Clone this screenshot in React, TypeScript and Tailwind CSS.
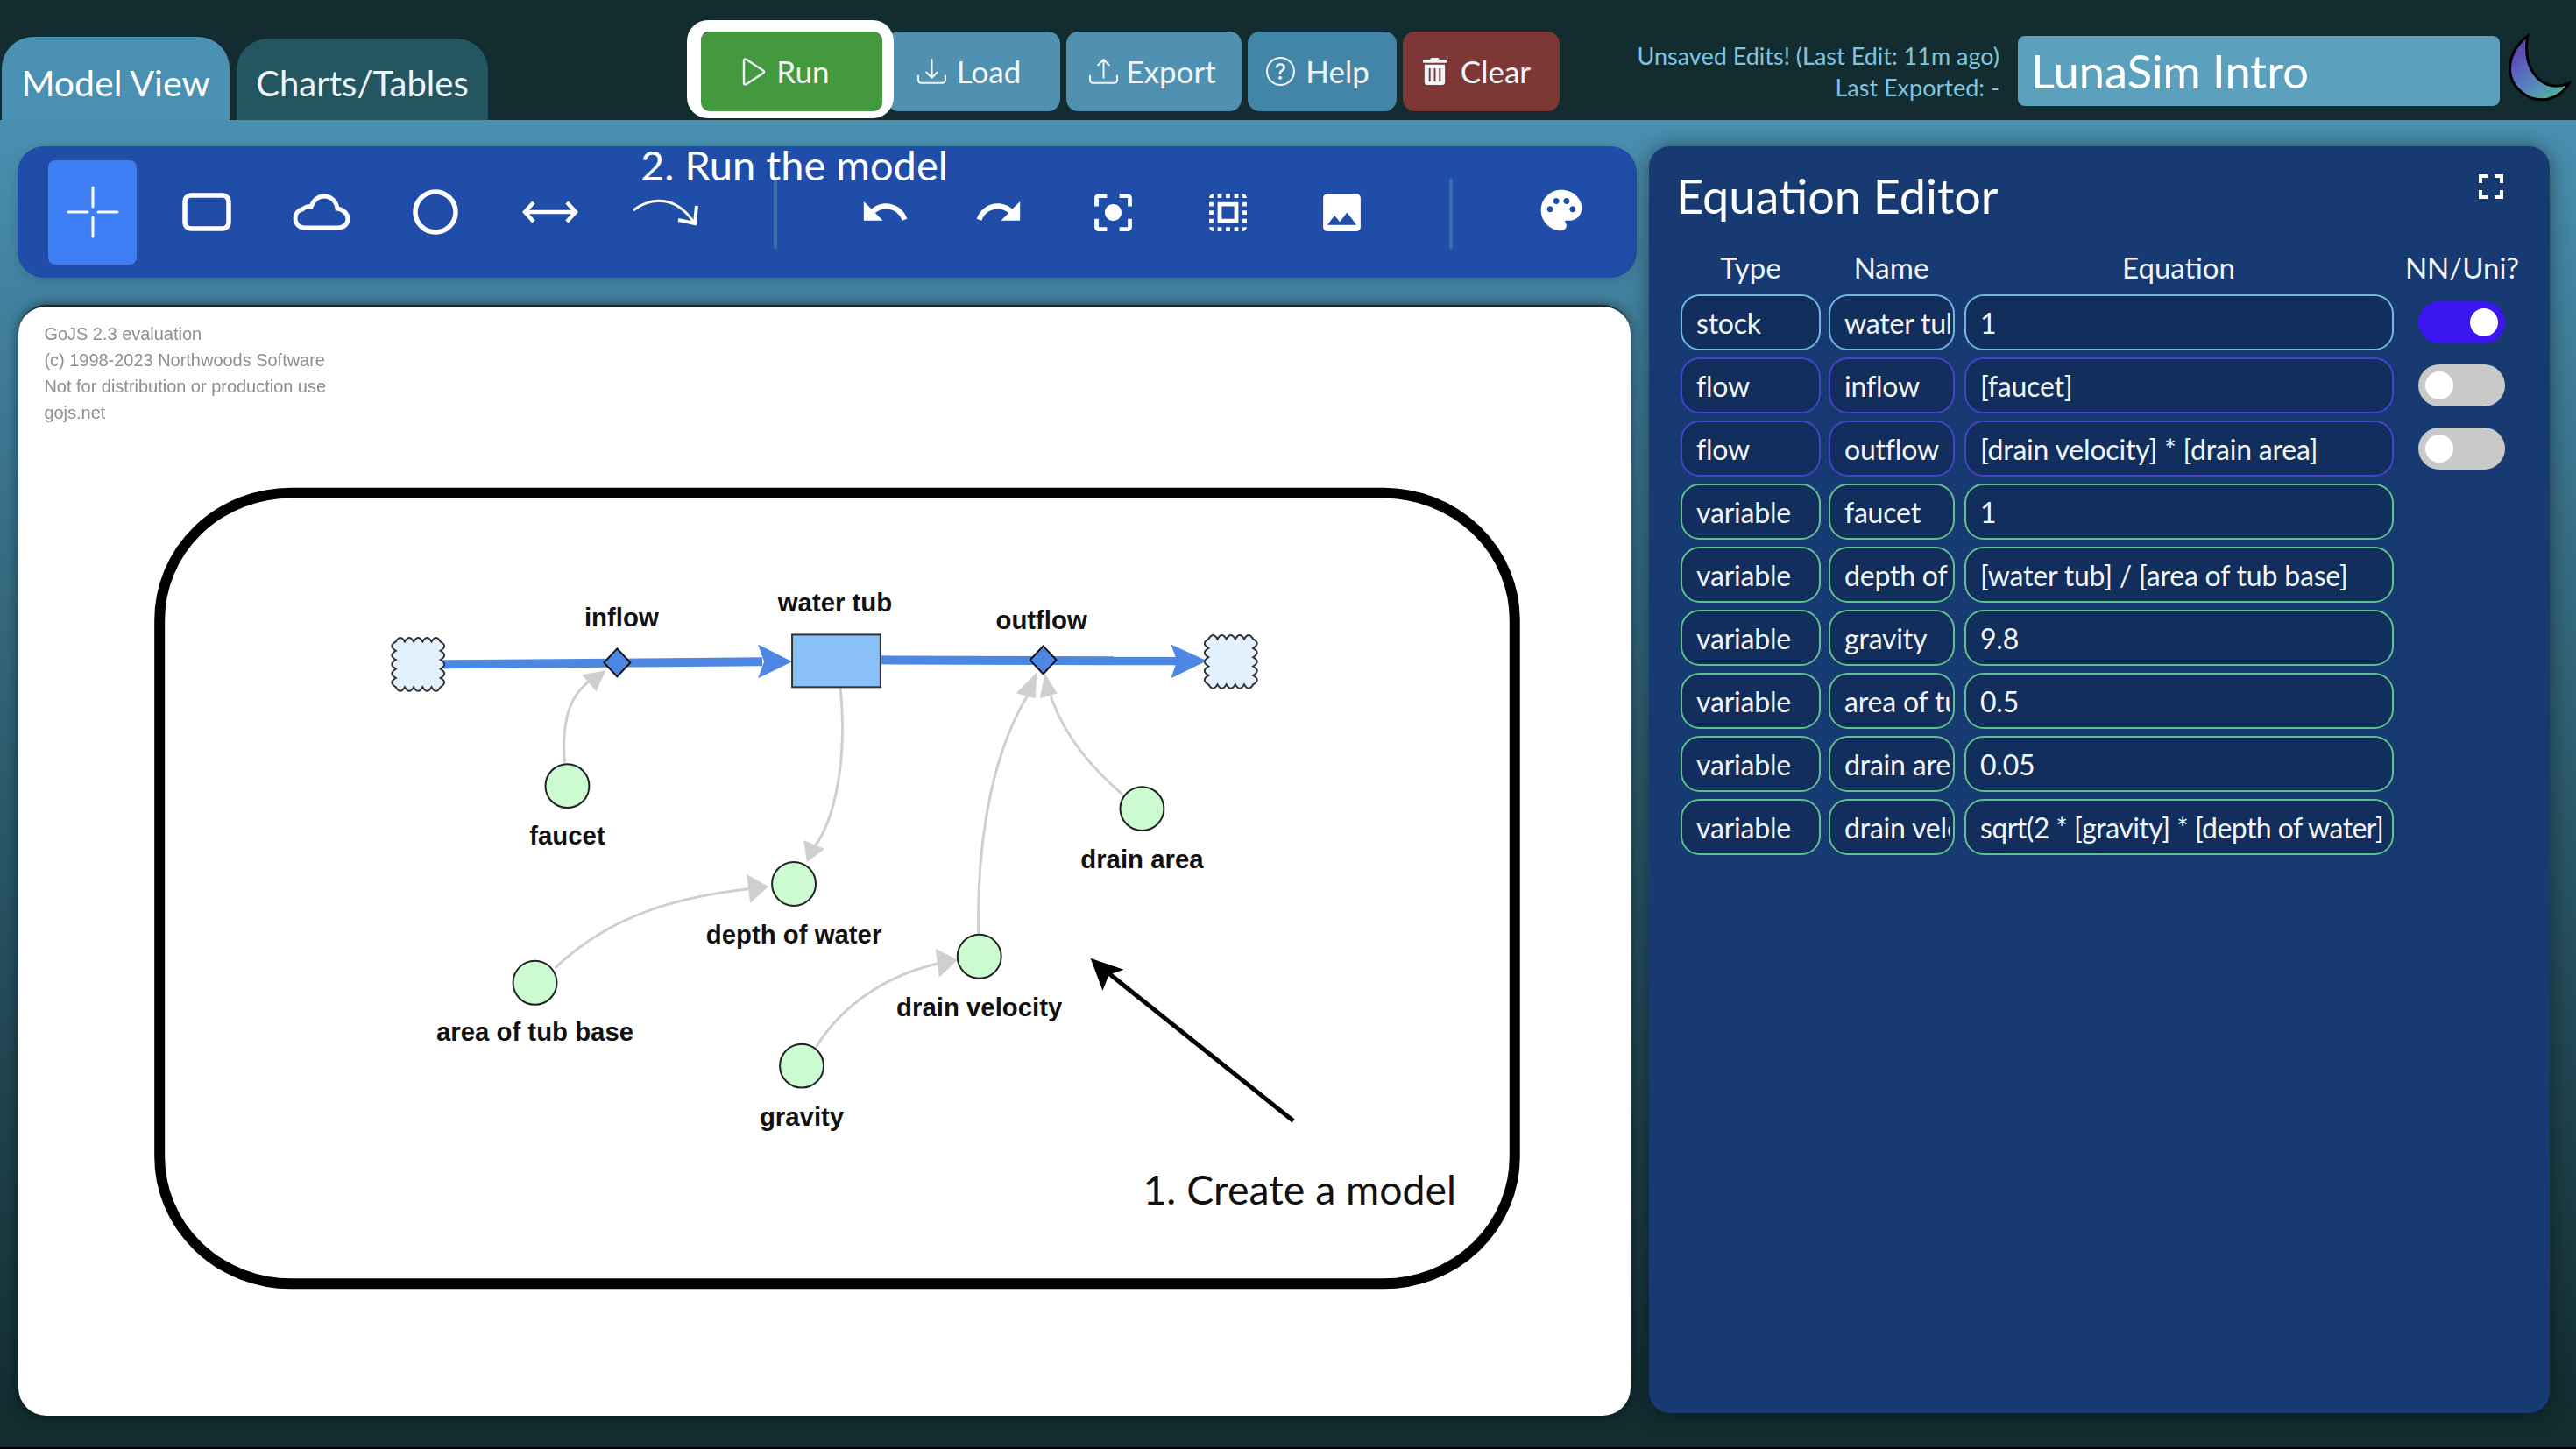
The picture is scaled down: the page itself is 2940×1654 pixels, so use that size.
import React from "react";
import { BsDownload, BsUpload, BsQuestionCircle } from "react-icons/bs";
import { FaTrashAlt } from "react-icons/fa";
import { MdUndo, MdRedo, MdCenterFocusStrong, MdOutlineSelectAll, MdImage, MdPalette, MdFullscreen } from "react-icons/md";

const rows = [
  { t: "stock", n: "water tub", e: "1", c: "border-[#6fb8e4]", s: "on", x: "tracking-[-0.2px]" },
  { t: "flow", n: "inflow", e: "[faucet]", c: "border-[#4343cc]", s: "off", x: "tracking-[-0.2px]" },
  { t: "flow", n: "outflow", e: "[drain velocity] * [drain area]", c: "border-[#4343cc]", s: "off", x: "tracking-[-0.2px]" },
  { t: "variable", n: "faucet", e: "1", c: "border-[#5fc28e]", s: "", x: "tracking-[-0.2px]" },
  { t: "variable", n: "depth of water", e: "[water tub] / [area of tub base]", c: "border-[#5fc28e]", s: "", x: "tracking-[-0.2px]" },
  { t: "variable", n: "gravity", e: "9.8", c: "border-[#5fc28e]", s: "", x: "tracking-[-0.2px]" },
  { t: "variable", n: "area of tub base", e: "0.5", c: "border-[#5fc28e]", s: "", x: "tracking-[-0.2px]" },
  { t: "variable", n: "drain area", e: "0.05", c: "border-[#5fc28e]", s: "", x: "tracking-[-0.2px]" },
  { t: "variable", n: "drain velocity", e: "sqrt(2 * [gravity] * [depth of water])", c: "border-[#5fc28e]", s: "", x: "tracking-[-0.55px]" },
];

function Cell({ v, c, w, pr }: { v: string; c: string; w: string; pr: string }) {
  return (
    <input
      readOnly
      value={v}
      className={`${w} ${c} ${pr} h-[64px] shrink-0 rounded-[22px] border-2 bg-[#122e5c] pl-[16px] text-[32px] text-[#f2f5f8] outline-none`}
    />
  );
}

function Toggle({ s }: { s: string }) {
  if (s === "on")
    return (
      <div className="ml-[28px] flex h-[48px] w-[99px] items-center justify-end rounded-full bg-[#3c16f0] pr-[8px]">
        <div className="h-[32px] w-[32px] rounded-full bg-white" />
      </div>
    );
  if (s === "off")
    return (
      <div className="ml-[28px] flex h-[48px] w-[99px] items-center rounded-full bg-[#c9c9c9] pl-[8px]">
        <div className="h-[32px] w-[32px] rounded-full bg-white" />
      </div>
    );
  return null;
}

function HBtn({ icon, label, cls }: { icon: React.ReactNode; label: string; cls: string }) {
  return (
    <div className={`flex h-[91px] items-center justify-center text-[35px] text-[#eef4f7] ${cls}`}>
      {icon}
      <span>{label}</span>
    </div>
  );
}

function Cloud({ x, y }: { x: number; y: number }) {
  const top = "q5.1 -9 10.2 0 ".repeat(5);
  const right = "q9 5.2 0 10.4 ".repeat(5);
  const bottom = "q-5.1 9 -10.2 0 ".repeat(5);
  const left = "q-9 -5.2 0 -10.4 ".repeat(5);
  return <path d={`M4 4 ${top}${right}${bottom}${left}z`} transform={`translate(${x} ${y})`} fill="#e3f0fd" stroke="#333" strokeWidth="2" />;
}

function Aux({ x, y }: { x: number; y: number }) {
  return <circle cx={x} cy={y} r="25" fill="#ccfbd2" stroke="#222" strokeWidth="2" />;
}

function Lbl({ x, y, t }: { x: number; y: number; t: string }) {
  return (
    <text x={x} y={y + 10} textAnchor="middle" fontFamily="'Liberation Sans', sans-serif" fontWeight="700" fontSize="29.4" fill="#111">
      {t}
    </text>
  );
}

function Link({ d, head }: { d: string; head: string }) {
  return (
    <g>
      <path d={d} fill="none" stroke="#cfcfcf" strokeWidth="3" />
      <polygon points={head} fill="#cfcfcf" />
    </g>
  );
}

function Diagram() {
  return (
    <svg viewBox="21 348 1840 1268" className="absolute inset-0 h-full w-full">
      <rect x="181" y="561" width="1549" height="904" rx="150" ry="145" fill="none" stroke="#000" strokeWidth="12" />
      <g fill="#8e8e8e" fontFamily="'Liberation Sans', sans-serif" fontSize="20" style={{ filter: "blur(0.6px)" }}>
        <text x="49" y="386">GoJS 2.3 evaluation</text>
        <text x="49" y="416">(c) 1998-2023 Northwoods Software</text>
        <text x="49" y="446">Not for distribution or production use</text>
        <text x="49" y="476">gojs.net</text>
      </g>

      <Link d="M644 870 C640 820 650 790 678 772" head="691,764 664,769 680,788" />
      <Link d="M959 783 C967 860 955 930 930 965" head="921,983 917,958 941,968" />
      <Link d="M633 1104 C700 1040 780 1022 860 1013" head="877,1011 852,997 856,1030" />
      <Link d="M1117 1065 C1115 950 1135 850 1178 785" head="1184,766 1160,790 1182,796" />
      <Link d="M1282 906 C1240 870 1210 830 1197 785" head="1193,768 1187,796 1207,790" />
      <Link d="M931 1195 C965 1140 1020 1110 1075 1098" head="1093,1095 1068,1082 1072,1115" />

      <line x1="505" y1="757" x2="870" y2="754" stroke="#4d87e3" strokeWidth="10" />
      <polygon points="904,754 865,734 872,754 865,773" fill="#4d87e3" />
      <line x1="1005" y1="752" x2="1345" y2="753" stroke="#4d87e3" strokeWidth="10" />
      <polygon points="1378,753 1337,734 1344,753 1337,773" fill="#4d87e3" />
      <Cloud x={447} y={727} />
      <Cloud x={1376} y={724} />
      <rect x="904" y="723" width="101" height="60" fill="#88c0f7" stroke="#333" strokeWidth="2" />
      <polygon points="704,739 719,755 704,771 689,755" fill="#4d87e3" stroke="#111" strokeWidth="2" />
      <polygon points="1191,736 1206,752 1191,768 1176,752" fill="#4d87e3" stroke="#111" strokeWidth="2" />

      <Aux x={647} y={896} />
      <Aux x={906} y={1008} />
      <Aux x={610} y={1121} />
      <Aux x={1118} y={1091} />
      <Aux x={1304} y={922} />
      <Aux x={915} y={1216} />
      <Lbl x={709} y={704} t="inflow" />
      <Lbl x={953} y={687} t="water tub" />
      <Lbl x={1189} y={707} t="outflow" />
      <Lbl x={647} y={953} t="faucet" />
      <Lbl x={1304} y={980} t="drain area" />
      <Lbl x={906} y={1066} t="depth of water" />
      <Lbl x={1118} y={1149} t="drain velocity" />
      <Lbl x={610} y={1177} t="area of tub base" />
      <Lbl x={915} y={1274} t="gravity" />

      <line x1="1477" y1="1279" x2="1258" y2="1104" stroke="#000" strokeWidth="5" />
      <polygon points="1245,1093 1283,1106 1266,1112 1259,1130" fill="#000" />
      <text x="1305" y="1375" fontFamily="Lato, sans-serif" fontSize="46.5" fill="#111">1. Create a model</text>
    </svg>
  );
}

function ToolCell({ children }: { children: React.ReactNode }) {
  return <div className="flex w-[130.5px] shrink-0 items-center justify-center">{children}</div>;
}

export default function App() {
  return (
    <div className="flex h-[1654px] w-[2940px] flex-col overflow-hidden bg-[#122c30] font-['Lato','Inter',sans-serif]">
      {/* header */}
      <header className="flex h-[137px] shrink-0 items-start bg-[#122c30]">
        <div className="ml-[2px] mt-[42px] flex h-[95px] w-[260px] items-center justify-center rounded-t-[36px] bg-[#4a90b2] pt-[10px] text-[41px] text-white">
          Model View
        </div>
        <div className="ml-[8px] mt-[44px] flex h-[93px] w-[287px] items-center justify-center rounded-t-[36px] bg-[#235660] pt-[8px] text-[40px] text-[#eef4f7]">
          Charts/Tables
        </div>
        <div className="z-10 ml-[227px] mt-[23px] h-[112px] w-[236px] rounded-[24px] border-y-[13px] border-l-[16px] border-r-[13px] border-white">
          <HBtn
            icon={
              <svg viewBox="0 0 28 32" className="h-[32px] w-[28px]" fill="none" stroke="#eef4f7" strokeWidth="2.4" strokeLinejoin="round">
                <path d="M3 3C3 1.5 4.5 1 6 2L25 14.5C26.5 15.5 26.5 16.5 25 17.5L6 30C4.5 31 3 30.5 3 29Z" />
              </svg>
            }
            label="Run"
            cls="h-[86px] gap-[12px] rounded-[10px] bg-[#44993f] pr-[14px]"
          />
        </div>
        <div className="mt-[36px] flex gap-[7px]">
          <HBtn icon={<BsDownload className="text-[33px]" />} label="Load" cls="-ml-[8px] w-[198px] gap-[12px] rounded-[14px] bg-[#5090b0] pr-[10px]" />
          <HBtn icon={<BsUpload className="text-[33px]" />} label="Export" cls="w-[200px] gap-[9px] rounded-[14px] bg-[#5090b0] pr-[3px]" />
          <HBtn icon={<BsQuestionCircle className="text-[33px]" />} label="Help" cls="w-[170px] gap-[12px] rounded-[14px] bg-[#4385a6] pr-[10px]" />
          <HBtn icon={<FaTrashAlt className="text-[31px]" />} label="Clear" cls="w-[179px] gap-[14px] rounded-[14px] bg-[#7d3734] pr-[12px]" />
        </div>
        <div className="ml-auto mt-[46px] text-right text-[27px] leading-[36px] text-[#7fc4e0]">
          <div>Unsaved Edits! (Last Edit: 11m ago)</div>
          <div>Last Exported: -</div>
        </div>
        <div className="ml-[21px] mt-[41px] flex h-[80px] w-[550px] items-center rounded-[8px] bg-[#5ba1bd] pl-[15px] text-[52.5px] text-white">
          LunaSim Intro
        </div>
        <svg viewBox="0 0 80 80" className="ml-[2px] mr-[5px] mt-[38px] h-[80px] w-[80px]">
          <defs>
            <linearGradient id="moon" x1="0.2" y1="0.1" x2="0.8" y2="0.95">
              <stop offset="0" stopColor="#5a42b8" />
              <stop offset="0.55" stopColor="#5a7ec0" />
              <stop offset="1" stopColor="#4fb39a" />
            </linearGradient>
          </defs>
          <path d="M30 3 C6 20 -2 58 34 74 C54 80 70 70 77 57 C48 70 22 42 30 3 Z" fill="url(#moon)" stroke="#000" strokeWidth="3" />
        </svg>
      </header>

      {/* main */}
      <main className="flex h-[1483px] shrink-0 bg-gradient-to-b from-[#4a90b2] to-[#122c30] pl-[20px] pt-[30px]">
        <div className="flex w-[1848px] flex-col">
          <div className="relative flex h-[150px] items-center rounded-[30px] bg-[#204da7] text-white shadow-[0_4px_14px_rgba(0,0,0,0.12)]">
            <div className="absolute left-[711px] top-[-9px] text-[47px] leading-[60px] text-white">2. Run the model</div>
            <div className="ml-[35px] flex h-[119px] w-[101px] shrink-0 items-center justify-center rounded-[8px] bg-[#3e7ef5]">
              <svg viewBox="0 0 60 60" className="h-[60px] w-[60px]" fill="none" stroke="#fff" strokeWidth="3" strokeLinecap="round">
                <path d="M30 2V24M30 36V58M2 30H24M36 30H58" />
              </svg>
            </div>
            <div className="ml-[15px] flex">
              <ToolCell>
                <svg viewBox="0 0 56 44" className="h-[44px] w-[56px]" fill="none" stroke="#fff" strokeWidth="5.5">
                  <rect x="3" y="3" width="50" height="38" rx="7" />
                </svg>
              </ToolCell>
              <ToolCell>
                <svg viewBox="0 0 66 42" className="h-[42px] w-[66px]" fill="none" stroke="#fff" strokeWidth="5">
                  <path d="M14 39 C6 39 3 33 3 28 C3 23 6 19 11 18 C15 15 17 14 21 15 C24 7 29 3 36 3 C45 3 50 10 51 17 C58 18 63 23 63 29 C63 35 58 39 52 39 Z" />
                </svg>
              </ToolCell>
              <ToolCell>
                <svg viewBox="0 0 52 52" className="h-[52px] w-[52px]" fill="none" stroke="#fff" strokeWidth="5.5">
                  <circle cx="26" cy="26" r="23" />
                </svg>
              </ToolCell>
              <ToolCell>
                <svg viewBox="0 0 64 28" className="h-[28px] w-[64px]" fill="none" stroke="#fff" strokeWidth="4.5">
                  <path d="M3 14H61M13 3L3 14L13 25M51 3L61 14L51 25" />
                </svg>
              </ToolCell>
              <ToolCell>
                <svg viewBox="0 0 76 32" className="ml-[3px] h-[32px] w-[76px]" fill="none" stroke="#fff" strokeWidth="4">
                  <path d="M1 14 C22 -2 50 -2 70 28" strokeWidth="3" />
                  <path d="M73 9L71 29L52 25" />
                </svg>
              </ToolCell>
            </div>
            <div className="ml-[59px] mt-[4px] h-[80px] w-[4px] shrink-0 rounded bg-[#3470a8]" />
            <div className="ml-[58px] flex">
              <ToolCell><MdUndo className="text-[58px]" /></ToolCell>
              <ToolCell><MdRedo className="text-[58px]" /></ToolCell>
              <ToolCell><MdCenterFocusStrong className="text-[57px]" /></ToolCell>
              <ToolCell><MdOutlineSelectAll className="text-[57px]" /></ToolCell>
              <ToolCell><MdImage className="text-[57px]" /></ToolCell>
            </div>
            <div className="ml-[57px] mt-[4px] h-[80px] w-[4px] shrink-0 rounded bg-[#3470a8]" />
            <div className="ml-[59px] mt-[-4px]">
              <ToolCell><MdPalette className="text-[56px]" /></ToolCell>
            </div>
          </div>
          <div className="relative ml-[1px] mt-[31px] h-[1268px] w-[1840px] overflow-hidden rounded-[32px] border-t-2 border-[#1a2a30] bg-white shadow-[0_0_14px_rgba(0,0,0,0.5)]">
            <Diagram />
          </div>
        </div>

        <aside className="relative ml-[14px] h-[1446px] w-[1028px] rounded-[24px] bg-[#173a72] shadow-[0_0_24px_rgba(0,0,0,0.45)]">
          <h2 className="ml-[31px] mt-[24px] text-[54px] font-normal leading-[66px] text-white">Equation Editor</h2>
          <MdFullscreen className="absolute right-[43px] top-[22px] text-[48px] text-white" />
          <div className="ml-[36px] mt-[28px] flex text-center text-[33px] leading-[40px] text-[#f2f5f8]">
            <div className="w-[160px]">Type</div>
            <div className="ml-[9px] w-[143px]">Name</div>
            <div className="ml-[12px] w-[489px]">Equation</div>
            <div className="ml-[9px] w-[140px]">NN/Uni?</div>
          </div>
          <div className="ml-[36px] mt-[11px] flex flex-col gap-[8px]">
            {rows.map((r, i) => (
              <div key={i} className="flex items-center">
                <Cell v={r.t} c={r.c} w="w-[160px] tracking-[-0.2px]" pr="pr-[4px]" />
                <div className="w-[9px] shrink-0" />
                <Cell v={r.n} c={r.c} w="w-[144px] tracking-[-0.2px]" pr="pr-[3px]" />
                <div className="w-[11px] shrink-0" />
                <Cell v={r.e} c={r.c} w={`w-[490px] ${r.x}`} pr="pr-[10px]" />
                <Toggle s={r.s} />
              </div>
            ))}
          </div>
        </aside>
      </main>
      <footer className="h-[34px] shrink-0 border-b-2 border-black bg-[#122c30]" />
    </div>
  );
}
